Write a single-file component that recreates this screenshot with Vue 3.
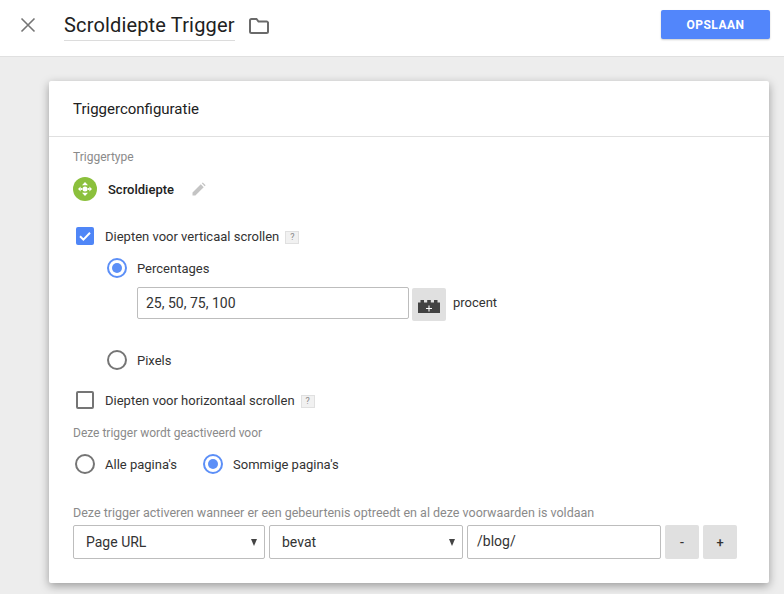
<script setup>
const conditions = ['Page URL', 'bevat']
</script>

<template>
  <div class="page">
    <header class="topbar">
      <svg class="close" width="16" height="16" viewBox="0 0 16 16"><path d="M1.5 1.5 14.5 14.5M14.5 1.5 1.5 14.5" stroke="#757575" stroke-width="1.6" fill="none"/></svg>
      <div class="title">Scroldiepte Trigger</div>
      <svg class="folder" width="20" height="16" viewBox="0 0 20 16"><path d="M1 2.5V13.5A1.5 1.5 0 0 0 2.5 15H17.5A1.5 1.5 0 0 0 19 13.5V4.5A1.5 1.5 0 0 0 17.5 3.5H9.5L7.5 1H2.5A1.5 1.5 0 0 0 1 2.5Z" fill="none" stroke="#6a6a6a" stroke-width="2"/></svg>
      <button class="save">OPSLAAN</button>
    </header>

    <main class="main">
      <section class="card">
        <div class="card-head">Triggerconfiguratie</div>
        <div class="card-body">
          <div class="label first">Triggertype</div>
          <div class="type-row">
            <span class="type-icon">
              <svg width="18" height="18" viewBox="0 0 18 18" fill="#fff">
                <path d="M9 2 12 5.2H6ZM9 16 6 12.8H12Z"/>
                <path d="M2 9 4.6 6.6V11.4ZM16 9 13.4 11.4V6.6Z"/>
                <circle cx="9" cy="9" r="2.5"/>
                <circle cx="5.4" cy="9" r="1.1"/>
                <circle cx="12.6" cy="9" r="1.1"/>
              </svg>
            </span>
            <span class="type-name">Scroldiepte</span>
            <svg class="pencil" width="14" height="14" viewBox="0 0 14 14"><path d="M0.5 13.5V10.6L8.8 2.3 11.7 5.2 3.4 13.5ZM9.8 1.3 10.8 0.4 13.6 3.2 12.7 4.2Z" fill="#c4c4c4"/></svg>
          </div>

          <div class="check-row vertical">
            <span class="check on">
              <svg width="18" height="18" viewBox="0 0 18 18"><path d="M4 9.2 7.4 12.6 14 5.8" fill="none" stroke="#fff" stroke-width="2"/></svg>
            </span>
            <span class="text low">Diepten voor verticaal scrollen</span>
            <span class="help">?</span>
          </div>

          <div class="nested">
            <div class="radio-row">
              <span class="radio on"></span>
              <span class="text low">Percentages</span>
            </div>
            <div class="value-row">
              <div class="field percent">25, 50, 75, 100</div>
              <button class="brick" aria-label="Variabele">
                <svg width="22" height="13" viewBox="0 0 22 13">
                  <path d="M0 2.5H2.5V0H6V2.5H9.2V0H12.8V2.5H16V0H19.5V2.5H22V13H0Z" fill="#424242"/>
                  <path d="M11 5.5V11.5M8 8.5H14" stroke="#fff" stroke-width="1.1"/>
                </svg>
              </button>
              <span class="text unit">procent</span>
            </div>
            <div class="radio-row pixels">
              <span class="radio"></span>
              <span class="text low">Pixels</span>
            </div>
          </div>

          <div class="check-row horizontal">
            <span class="check"></span>
            <span class="text low">Diepten voor horizontaal scrollen</span>
            <span class="help">?</span>
          </div>

          <div class="label fires">Deze trigger wordt geactiveerd voor</div>
          <div class="page-choice">
            <div class="radio-row">
              <span class="radio"></span>
              <span class="text low">Alle pagina's</span>
            </div>
            <div class="radio-row">
              <span class="radio on"></span>
              <span class="text low">Sommige pagina's</span>
            </div>
          </div>

          <div class="label when">Deze trigger activeren wanneer er een gebeurtenis optreedt en al deze voorwaarden is voldaan</div>
          <div class="condition">
            <div v-for="(c, i) in conditions" :key="c" class="field select" :class="i === 0 ? 'first-select' : 'second-select'">
              <span>{{ c }}</span>
              <span class="caret"></span>
            </div>
            <div class="field url">/blog/</div>
            <button class="mini">-</button>
            <button class="mini">+</button>
          </div>
        </div>
      </section>
    </main>
  </div>
</template>

<style>
html, body { margin: 0; background: #ededed; }
</style>

<style scoped>
.page {
  width: 784px;
  height: 594px;
  overflow: hidden;
  background: #ededed;
  font-family: Roboto, "Liberation Sans", sans-serif;
  color: #212121;
}
.topbar {
  height: 56px;
  display: flex;
  align-items: center;
  background: #fff;
  border-bottom: 1px solid #e0e0e0;
}
.close { margin-left: 20px; flex: none; margin-top: -7px; }
.title {
  margin-left: 28px;
  width: 171px;
  height: 32px;
  margin-top: -7px;
  padding-top: 3px;
  box-sizing: border-box;
  border-bottom: 1px solid #dcdcdc;
  font-size: 20px;
  line-height: 27px;
  letter-spacing: 0.16px;
  white-space: nowrap;
}
.folder { margin-left: 14px; margin-top: -5px; flex: none; }
.save {
  margin-left: auto;
  margin-right: 14px;
  margin-top: -7px;
  width: 109px;
  height: 29px;
  border: 0;
  border-radius: 2px;
  background: #5286fb;
  color: #fff;
  font: 700 12px Roboto, "Liberation Sans", sans-serif;
  letter-spacing: 0.5px;
  box-shadow: 0 1px 2px rgba(0, 0, 0, 0.2);
}
.main { padding: 24px 15px 0 49px; }
.card {
  width: 720px;
  height: 502px;
  background: #fff;
  border-radius: 2px;
  box-shadow: 0 3px 10px rgba(0, 0, 0, 0.35);
}
.card-head {
  height: 56px;
  box-sizing: border-box;
  padding: 19px 24px 0;
  font-size: 15px;
  line-height: 18px;
  border-bottom: 1px solid #e0e0e0;
}
.card-body { padding: 0 24px; }
.label {
  font-size: 12px;
  line-height: 14px;
  color: #8a8a8a;
  white-space: nowrap;
}
.label.first { padding-top: 13px; }
.type-row { display: flex; align-items: center; height: 24px; margin-top: 13px; }
.type-icon {
  width: 24px;
  height: 24px;
  border-radius: 50%;
  background: #8bc03c;
  display: flex;
  align-items: center;
  justify-content: center;
}
.type-name { margin-left: 11px; font-size: 13px; font-weight: 500; }
.pencil { margin-left: 18px; }
.text { font-size: 13px; line-height: 18px; white-space: nowrap; color: #333; }
.text.low { padding-top: 2px; }
.check-row { display: flex; align-items: center; height: 18px; padding-left: 3px; }
.check-row.vertical { margin-top: 26px; }
.check-row.horizontal { margin-top: 21px; }
.check {
  width: 18px;
  height: 18px;
  box-sizing: border-box;
  border: 2px solid #757575;
  border-radius: 2px;
  margin-right: 11px;
  flex: none;
}
.check.on { border: 0; background: #4f86f7; }
.help {
  margin: 3px 0 0 6px;
  width: 14px;
  height: 13px;
  box-sizing: border-box;
  background: #f1f1f1;
  border: 1px solid #e0e0e0;
  font-size: 9px;
  line-height: 11px;
  text-align: center;
  color: #888;
}
.nested { padding-left: 34px; }
.radio-row { display: flex; align-items: center; height: 20px; }
.nested > .radio-row:first-child { margin-top: 13px; }
.radio {
  width: 20px;
  height: 20px;
  box-sizing: border-box;
  border: 2px solid #757575;
  border-radius: 50%;
  margin-right: 10px;
  flex: none;
  position: relative;
}
.radio.on { border-color: #5c8ff7; }
.radio.on::after {
  content: "";
  position: absolute;
  inset: 3px;
  border-radius: 50%;
  background: #5c8ff7;
}
.value-row { display: flex; align-items: flex-start; margin: 9px 0 0 30px; }
.field {
  box-sizing: border-box;
  background: #fff;
  border: 1px solid #bdbdbd;
  border-radius: 2px;
  font-size: 14px;
  color: #333;
  white-space: nowrap;
}
.percent { width: 272px; height: 32px; line-height: 30px; padding-left: 8px; }
.brick {
  margin: 1px 0 0 3px;
  width: 34px;
  height: 33px;
  border: 0;
  border-radius: 2px;
  background: #e0e0e0;
  padding: 3px 0 0;
  display: flex;
  align-items: center;
  justify-content: center;
}
.unit { margin: 7px 0 0 7px; }
.radio-row.pixels { margin-top: 29px; }
.label.fires { margin-top: 17px; }
.page-choice { display: flex; gap: 26px; margin: 14px 0 0 2px; }
.label.when { margin-top: 32px; font-size: 12.5px; }
.condition { display: flex; gap: 4px; margin-top: 5px; height: 34px; }
.select { display: flex; align-items: center; justify-content: space-between; height: 34px; padding: 0 7px 0 12px; }
.first-select { width: 192px; }
.second-select { width: 194px; padding-left: 12px; }
.caret {
  width: 0;
  height: 0;
  border-left: 3.5px solid transparent;
  border-right: 3.5px solid transparent;
  border-top: 7px solid #444;
}
.url { width: 194px; height: 34px; line-height: 30px; padding-left: 9px; }
.mini {
  width: 34px;
  height: 34px;
  border: 0;
  border-radius: 2px;
  background: #e0e0e0;
  color: #333;
  font: 500 13px Roboto, "Liberation Sans", sans-serif;
  padding: 0;
}
</style>
